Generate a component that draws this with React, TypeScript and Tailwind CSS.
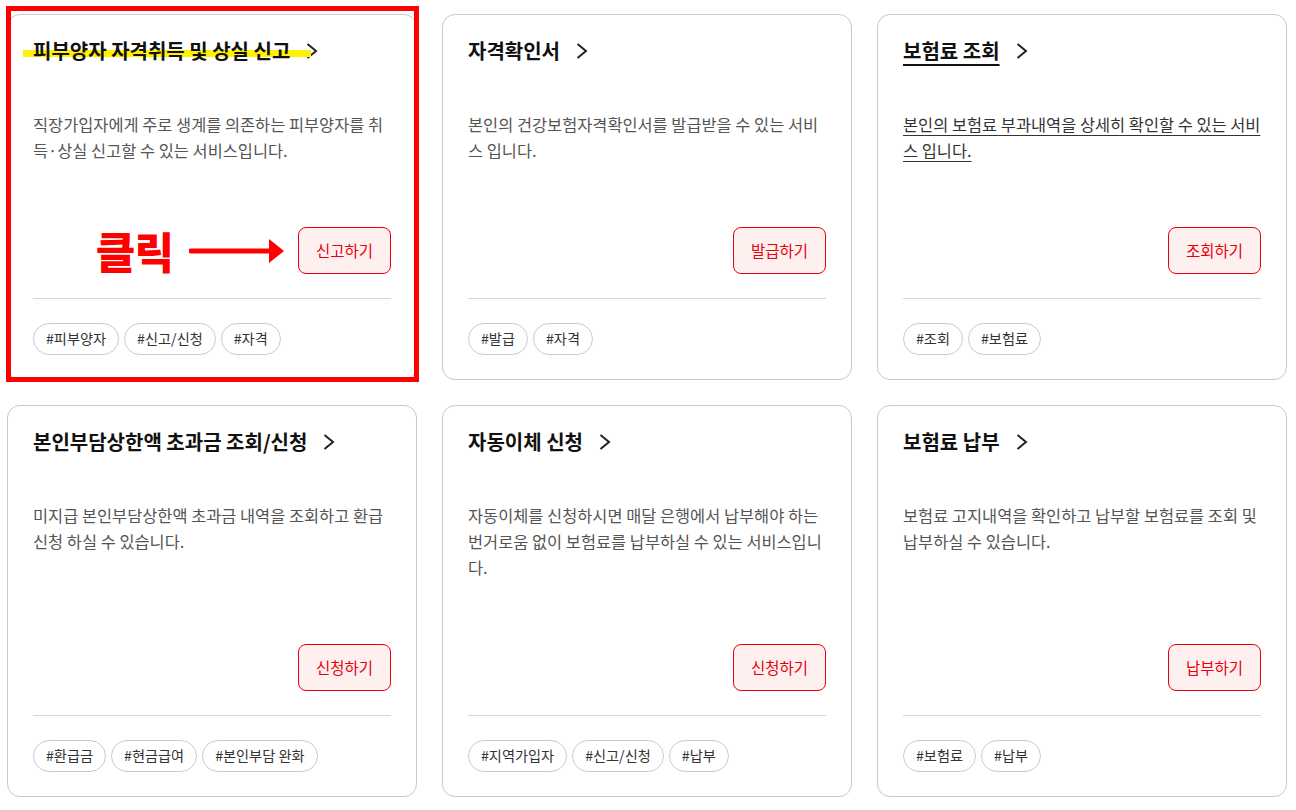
import type { ReactNode } from 'react';

type Card = {
  title: string;
  desc: string;
  action: string;
  tags: string[];
  hover?: boolean;
  marked?: boolean;
};

const cards: Card[] = [
  {
    title: '피부양자 자격취득 및 상실 신고',
    desc: '직장가입자에게 주로 생계를 의존하는 피부양자를 취득·상실 신고할 수 있는 서비스입니다.',
    action: '신고하기',
    tags: ['#피부양자', '#신고/신청', '#자격'],
    marked: true,
  },
  {
    title: '자격확인서',
    desc: '본인의 건강보험자격확인서를 발급받을 수 있는 서비스 입니다.',
    action: '발급하기',
    tags: ['#발급', '#자격'],
  },
  {
    title: '보험료 조회',
    desc: '본인의 보험료 부과내역을 상세히 확인할 수 있는 서비스 입니다.',
    action: '조회하기',
    tags: ['#조회', '#보험료'],
    hover: true,
  },
  {
    title: '본인부담상한액 초과금 조회/신청',
    desc: '미지급 본인부담상한액 초과금 내역을 조회하고 환급 신청 하실 수 있습니다.',
    action: '신청하기',
    tags: ['#환급금', '#현금급여', '#본인부담 완화'],
  },
  {
    title: '자동이체 신청',
    desc: '자동이체를 신청하시면 매달 은행에서 납부해야 하는 번거로움 없이 보험료를 납부하실 수 있는 서비스입니다.',
    action: '신청하기',
    tags: ['#지역가입자', '#신고/신청', '#납부'],
  },
  {
    title: '보험료 납부',
    desc: '보험료 고지내역을 확인하고 납부할 보험료를 조회 및 납부하실 수 있습니다.',
    action: '납부하기',
    tags: ['#보험료', '#납부'],
  },
];

function Chevron() {
  return (
    <svg width="12" height="16" viewBox="0 0 12 16" className="ml-4 shrink-0">
      <polyline points="1.5,1 10,8 1.5,15" fill="none" stroke="#222" strokeWidth="2" />
    </svg>
  );
}

function ClickHint() {
  return (
    <div className="mr-[13px] flex items-center">
      <span className="text-[43px] font-extrabold leading-none tracking-[-1px] text-[#ff0000]">클릭</span>
      <svg width="96" height="28" viewBox="0 0 96 28" className="ml-[16px]">
        <line x1="2" y1="14" x2="82" y2="14" stroke="#ff0000" strokeWidth="5" strokeLinecap="round" />
        <polygon points="80,2 95,14 80,26" fill="#ff0000" />
      </svg>
    </div>
  );
}

function ServiceCard({ card }: { card: Card }) {
  let hint: ReactNode = null;
  if (card.marked) hint = <ClickHint />;

  return (
    <div className="relative flex flex-col rounded-[13px] border border-[#c9c9c9] bg-white px-[25px] pb-6 pt-6">
      <div className="relative flex h-6 items-center">
        {card.marked && <span className="absolute -left-[10px] top-[11px] h-[7px] w-[288px] bg-[#fff200]" />}
        <span
          className={`relative text-[20px] font-bold leading-6 text-[#111] ${card.hover ? 'underline decoration-2 underline-offset-[5px]' : ''}`}
        >
          {card.title}
        </span>
        <Chevron />
      </div>
      <p
        className={`mt-12 flex-1 text-[16.4px] leading-[26px] ${card.hover ? 'text-[#333] underline underline-offset-[4px]' : 'text-[#555]'}`}
      >
        {card.desc}
      </p>
      <div className="mt-16 flex items-center justify-end">
        {hint}
        <button className="h-[47px] rounded-lg border border-[#e8000b] bg-[#fff0f0] px-[17px] text-[15.5px] text-[#e8000b]">
          {card.action}
        </button>
      </div>
      <div className="mt-6 flex gap-[5px] border-t border-[#d6d6d6] pt-6">
        {card.tags.map((tag) => (
          <span
            key={tag}
            className="flex h-8 items-center rounded-full border border-[#cccccc] px-3 text-[14.2px] text-[#333]"
          >
            {tag}
          </span>
        ))}
      </div>
      {card.marked && (
        <div className="pointer-events-none absolute -bottom-[3px] -left-[2px] -right-[3px] -top-[9px] border-[5px] border-[#ff0000]" />
      )}
    </div>
  );
}

export default function App() {
  return (
    <div className="min-h-[810px] bg-white px-[7px] pt-[14px] font-['Noto_Sans_CJK_KR','Noto_Sans',sans-serif]">
      <div className="grid grid-cols-[410px_410px_410px] gap-[25px]">
        {cards.map((card) => (
          <ServiceCard key={card.title} card={card} />
        ))}
      </div>
    </div>
  );
}
